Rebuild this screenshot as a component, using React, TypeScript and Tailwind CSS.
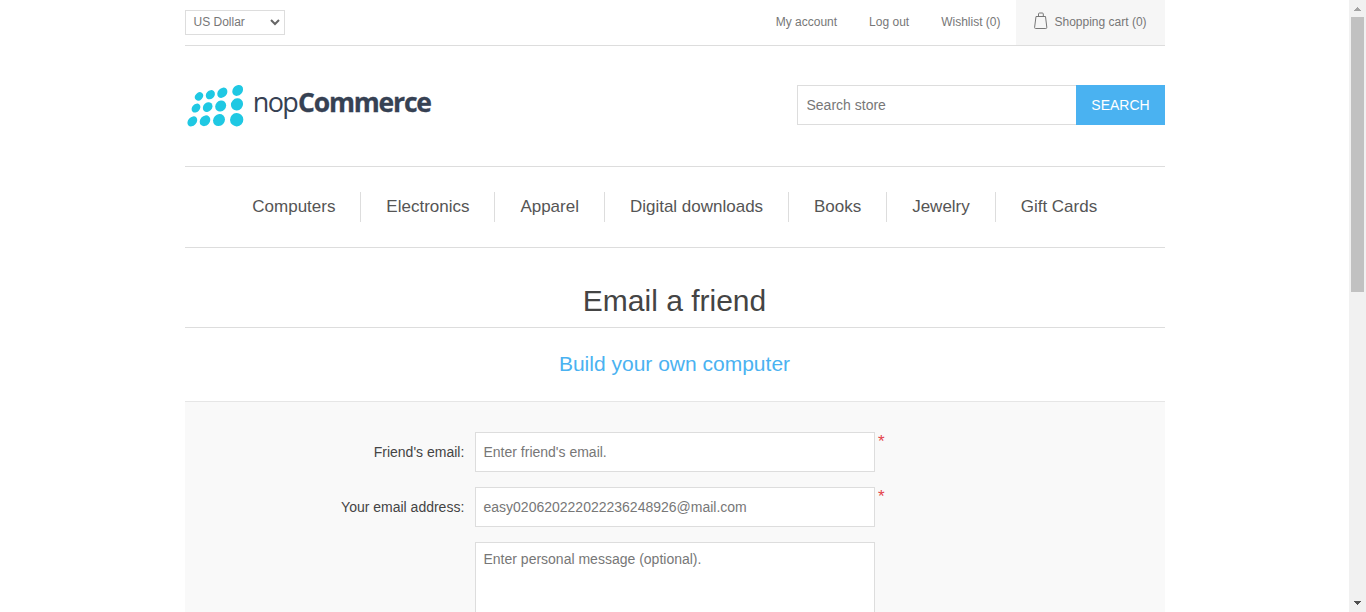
const dots = [
  [57, 63, 13.5, 11], [91, 58, 15, 12.5], [127, 52, 17, 13.5], [173, 45, 18, 14.5],
  [48, 98, 15, 11.5], [83, 95, 16, 13], [122, 92, 17.5, 15.5], [171, 87, 19, 17.5],
  [37, 138, 17, 12.5], [75, 136, 17.5, 14.5], [117, 134, 19, 17], [170, 133, 20, 20],
];

const nav = ['Computers', 'Electronics', 'Apparel', 'Digital downloads', 'Books', 'Jewelry', 'Gift Cards'];

function Logo() {
  return (
    <svg width="260" height="50" viewBox="0 0 260 50" className="mt-[34px] shrink-0" role="img" aria-label="nopCommerce">
      <g transform="translate(-5 -4.600) scale(0.33333)" fill="#1fc8e3">
        {dots.map(([x, y, rx, ry]) => (
          <ellipse key={`${x}-${y}`} cx={x} cy={y} rx={rx} ry={ry} transform={`rotate(-47 ${x} ${y})`} />
        ))}
      </g>
      <g fill="#364153" className="font-['Open_Sans',sans-serif]">
        <text x="67.800" y="32" fontSize="27" textLength="46" lengthAdjust="spacing">nop</text>
        <text x="113" y="32" fontSize="26.500" fontWeight="700" stroke="#364153" strokeWidth="0.3" textLength="134" lengthAdjust="spacing">Commerce</text>
      </g>
    </svg>
  );
}

function Field({ label, placeholder, value }: { label: string; placeholder?: string; value?: string }) {
  return (
    <div className="mb-[15px] flex h-10">
      <label className="mr-[10.7px] w-[279.3px] text-right text-[14px] leading-10 text-[#444]">{label}</label>
      <input
        className="h-10 w-[400px] border border-[#ddd] bg-white px-[7.5px] text-[14px] text-[#777] outline-none placeholder:text-[#777]"
        placeholder={placeholder}
        defaultValue={value}
      />
      <span className="ml-[3px] text-[17px] leading-[20px] text-[#e4434b]">*</span>
    </div>
  );
}

export default function App() {
  return (
    <div className="flex h-[612px] w-[1366px] overflow-hidden bg-white font-['Liberation_Sans',Arial,sans-serif] text-[14px] text-[#777]">
      <div className="w-[1349px] pl-[185px]">
        <div className="w-[980px]">
          <header>
            <div className="flex h-[46px] justify-between border-b border-[#ddd] text-[12px]">
              <div className="mt-[10px] flex h-[25px] w-[100px] items-center justify-between border border-[#ddd] pr-[4px] pb-px pl-[7.5px]">
                <span>US Dollar</span>
                <svg width="10" height="7" viewBox="0 0 10 7" fill="none" stroke="#666" strokeWidth="2">
                  <path d="M1 1l4 4 4-4" />
                </svg>
              </div>
              <div className="flex leading-[44px]">
                <a className="mr-[32px]">My account</a>
                <a className="mr-[32px]">Log out</a>
                <a className="mr-[15.5px]">Wishlist (0)</a>
                <a className="flex w-[149px] bg-[#f6f6f6] pl-[17.5px]">
                  <svg width="14" height="18" viewBox="0 0 14 18" fill="none" stroke="#777" className="mt-[12px] mr-[7px]">
                    <path d="M2 4.500h9.500l1.300 10.800q.2 1.200-1 1.200H1.600q-1.200 0-1-1.200zM4.500 4.500V2q0-1 1-1h2.800q1 0 1 1v2.500" />
                  </svg>
                  <span>Shopping cart (0)</span>
                </a>
              </div>
            </div>
            <div className="flex h-[120px] justify-between">
              <Logo />
              <form className="mt-[39px] flex h-10">
                <input className="w-[279px] border border-r-0 border-[#ddd] px-[8.5px] text-[14px] outline-none placeholder:text-[#777]" placeholder="Search store" />
                <button type="button" className="w-[89px] bg-[#4ab2f1] text-[14px] text-white">SEARCH</button>
              </form>
            </div>
          </header>
          <nav className="flex h-[82px] items-center justify-center border-y border-[#ddd] pr-[0.6px] text-[17px] text-[#555]">
            {nav.map((item, i) => (
              <a key={item} className={`flex h-[30px] items-center pr-[24.9px] pl-[25px] ${i ? 'border-l border-[#ddd]' : ''}`}>{item}</a>
            ))}
          </nav>
          <h1 className="flex h-[80px] items-end justify-center border-b border-[#ddd] pr-px pb-[9px] text-[30px] leading-[35px] text-[#444]">Email a friend</h1>
          <h2 className="flex h-[73px] items-center justify-center pr-px pb-px text-[21px] text-[#4ab2f1]">Build your own computer</h2>
          <section className="h-[260px] border-t border-[#e6e6e6] bg-[#f9f9f9] pt-[30px]">
            <Field label="Friend's email:" placeholder="Enter friend's email." />
            <Field label="Your email address:" value="easy020620222022236248926@mail.com" />
            <textarea className="ml-[290px] block h-[150px] w-[400px] resize-none border border-[#ddd] bg-white px-[7.5px] py-[6px] leading-[20px] outline-none placeholder:text-[#777]" placeholder="Enter personal message (optional)." />
          </section>
        </div>
      </div>
      <div className="flex w-[17px] flex-col items-center bg-[#f1f1f1]">
        <svg width="17" height="17" shapeRendering="crispEdges"><path d="M5 11h7L8.500 7z" fill="#a3a3a3" /></svg>
        <div className="h-[275px] w-[13px] bg-[#c1c1c1]" />
        <svg width="17" height="17" shapeRendering="crispEdges" className="mt-auto"><path d="M5 6h7l-3.500 4z" fill="#505050" /></svg>
      </div>
    </div>
  );
}
